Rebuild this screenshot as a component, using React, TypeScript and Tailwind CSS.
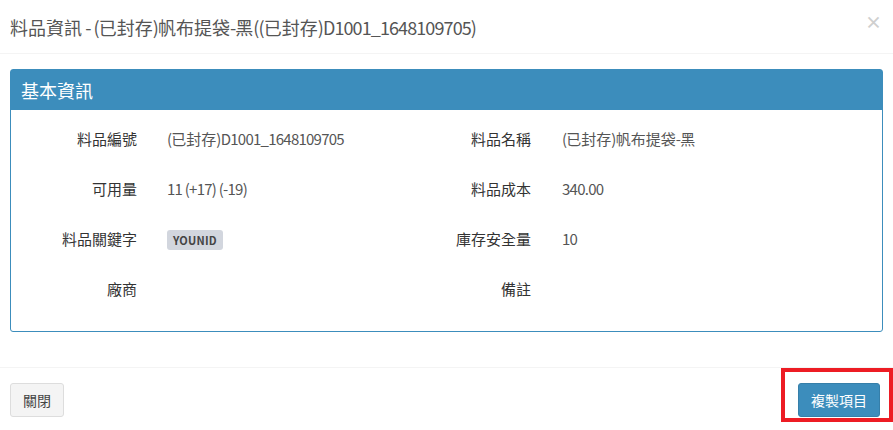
import React from "react";

const font = { fontFamily: '"Noto Sans CJK TC", "Noto Sans CJK JP", "Noto Sans", sans-serif' };

function T({ s }: { s: string }) {
  const parts = s.split(/([\u0000-\u007f]+)/).filter((p) => p.length > 0);
  return (
    <>
      {parts.map((p, i) =>
        /^[\u0000-\u007f]+$/.test(p) ? (
          <span key={i} className="tracking-[-0.05em]">
            {p}
          </span>
        ) : (
          <span key={i}>{p}</span>
        )
      )}
    </>
  );
}

function Row({ l1, v1, l2, v2 }: { l1: string; v1: React.ReactNode; l2: string; v2: React.ReactNode }) {
  return (
    <div className="flex h-[50px] items-center text-[15px] leading-[20px]">
      <div className="w-[126px] text-right text-[#333]">{l1}</div>
      <div className="ml-[30px] w-[264px] text-[#555]">{v1}</div>
      <div className="w-[100px] text-right text-[#333]">{l2}</div>
      <div className="ml-[31px] text-[#555]">{v2}</div>
    </div>
  );
}

export default function App() {
  return (
    <div className="relative h-[430px] w-[893px] overflow-hidden bg-white" style={font}>
      <div className="flex h-[54px] items-center justify-between border-b border-[#f4f4f4] pl-[10px] pr-[11px]">
        <div className="text-[18px] leading-[24px] text-[#555]">
          <T s="料品資訊 - (已封存)帆布提袋-黑((已封存)D1001_1648109705)" />
        </div>
        <div className="-mt-[11px] text-[17px] font-bold leading-none text-[#cfcfcf]">×</div>
      </div>
      <div className="px-[10px] pb-[35px] pt-[15px]">
        <div className="h-[263px] rounded-[3px] border border-[#3c8dbc]">
          <div className="flex h-[40px] items-center bg-[#3c8dbc] pl-[10px] text-[18px] leading-[24px] text-white">
            基本資訊
          </div>
          <div className="pt-[4px]">
            <Row
              l1="料品編號"
              v1={<T s="(已封存)D1001_1648109705" />}
              l2="料品名稱"
              v2={<T s="(已封存)帆布提袋-黑" />}
            />
            <Row l1="可用量" v1={<T s="11 (+17) (-19)" />} l2="料品成本" v2={<T s="340.00" />} />
            <Row
              l1="料品關鍵字"
              v1={
                <span className="inline-flex h-[20px] items-center rounded-[3px] bg-[#d2d6de] px-[6px] text-[11px] font-bold tracking-[0.2px] text-[#444]">
                  YOUNID
                </span>
              }
              l2="庫存安全量"
              v2={<T s="10" />}
            />
            <Row l1="廠商" v1="" l2="備註" v2="" />
          </div>
        </div>
      </div>
      <div className="flex items-center justify-between border-t border-[#f4f4f4] pl-[10px] pr-[13px] pt-[15px]">
        <button className="h-[34px] w-[54px] rounded-[3px] border border-[#ddd] bg-[#f4f4f4] text-[14px] text-[#444]">
          關閉
        </button>
        <button className="h-[34px] w-[82px] rounded-[3px] border border-[#367fa9] bg-[#3c8dbc] text-[14px] text-white">
          複製項目
        </button>
      </div>
      <div className="absolute left-[781px] top-[368px] h-[54px] w-[112px] border-[4px] border-[#ed1c24]" />
    </div>
  );
}
